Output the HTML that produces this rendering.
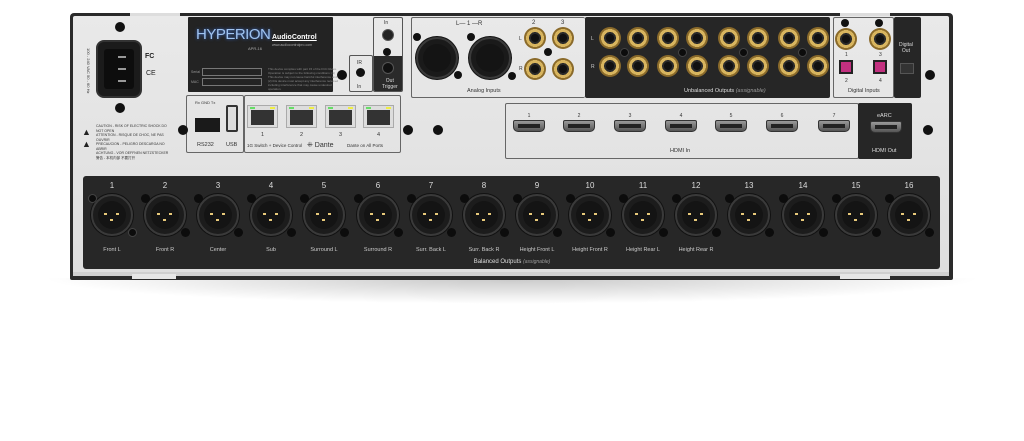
<!DOCTYPE html>
<html><head><meta charset="utf-8"><style>
*{margin:0;padding:0;box-sizing:border-box}
body{width:1024px;height:441px;background:#fff;position:relative;overflow:hidden;font-family:"Liberation Sans",sans-serif}
.a{position:absolute}
.sc{position:absolute;width:10px;height:10px;border-radius:50%;background:#111;margin:-5px 0 0 -5px}
.xlr{position:absolute;width:42px;height:42px;margin:-21px 0 0 -21px;border-radius:50%;background:#1c1c1c;border:2px solid #3a3a3a;box-shadow:0 0 0 1px #111}
.xlr i{position:absolute;width:3px;height:2px;background:#e8c97a}
.xlr::after{content:"";position:absolute;left:5px;top:5px;width:28px;height:28px;border-radius:50%;background:#141414}
.xs{position:absolute;width:9px;height:9px;border-radius:50%;background:#0c0c0c;border:1px solid #444;margin:-4px 0 0 -4px}
.n{position:absolute;color:#ddd;font-size:8px;transform:translateX(-50%)}
.lb{position:absolute;color:#ccc;font-size:5.5px;transform:translateX(-50%);white-space:nowrap}
.rca{position:absolute;width:22px;height:22px;margin:-11px 0 0 -11px;border-radius:50%;background:radial-gradient(circle,#111 0 4px,#2a2a2a 4px 6px,#d8b55f 6px 9px,#8a6a2a 9px 11px)}
.hd{position:absolute;width:32px;height:12px;margin:-6px 0 0 -16px;background:linear-gradient(#999,#555);border-radius:2px 2px 5px 5px;border:1px solid #333}
.hd::after{content:"";position:absolute;left:4px;top:3px;width:22px;height:4px;background:#222}
.eth{position:absolute;width:31px;height:23px;background:#ddd;border:1px solid #aaa}
.eth::after{content:"";position:absolute;left:3px;top:4px;width:23px;height:15px;background:#333}
.eth b{position:absolute;top:1px;width:5px;height:2px}
.t{position:absolute;font-size:5px;color:#333;white-space:nowrap}
</style></head><body>
<!-- shadow -->
<div class="a" style="left:40px;top:278px;width:944px;height:26px;background:radial-gradient(ellipse at 50% 0,rgba(0,0,0,.22),rgba(0,0,0,0) 70%)"></div>
<!-- chassis -->
<div class="a" style="left:70px;top:13px;width:883px;height:267px;background:#2a2a2a;border-radius:4px 4px 2px 2px"></div>
<div class="a" style="left:73px;top:16px;width:876px;height:260px;background:linear-gradient(#e9e9e9,#dedede);border-radius:2px"></div>
<div class="a" style="left:130px;top:13px;width:50px;height:3px;background:#ddd"></div>
<div class="a" style="left:840px;top:13px;width:50px;height:3px;background:#ddd"></div>

<!-- power -->
<div class="a" style="left:96px;top:40px;width:46px;height:58px;background:#1b1b1b;border-radius:8px;border:2px solid #333"></div>
<div class="a" style="left:104px;top:49px;width:30px;height:40px;background:#0d0d0d;border-radius:3px"></div>
<div class="a" style="left:118px;top:56px;width:8px;height:2px;background:#999"></div>
<div class="a" style="left:118px;top:68px;width:8px;height:2px;background:#999"></div>
<div class="a" style="left:118px;top:80px;width:8px;height:2px;background:#999"></div>
<div class="sc" style="left:120px;top:27px"></div><div class="sc" style="left:120px;top:108px"></div>
<div class="t" style="left:145px;top:53px;font-size:7px;font-weight:bold;color:#222">FC</div>
<div class="t" style="left:146px;top:70px;font-size:7px;color:#222">CE</div>
<div class="t" style="left:86px;top:48px;font-size:4px;writing-mode:vertical-rl">100 - 240 VAC 50 - 60 Hz</div>
<div class="a" style="left:82px;top:127px;font-size:9px;color:#222">▲</div>
<div class="a" style="left:82px;top:139px;font-size:9px;color:#222">▲</div>
<div class="t" style="left:96px;top:124px;font-size:3.5px;line-height:4.5px">CAUTION - RISK OF ELECTRIC SHOCK DO<br>NOT OPEN<br>ATTENTION - RISQUE DE CHOC, NE PAS<br>OUVRIR<br>PRECAUCION - PELIGRO DESCARGA NO<br>ABRIR<br>ACHTUNG - VOR OEFFNEN NETZSTECKER<br>警告 - 本机内部 不要打开</div>

<!-- logo label -->
<div class="a" style="left:188px;top:17px;width:145px;height:75px;background:#232323;border-radius:1px"></div>
<div class="a" style="left:196px;top:26px;font-size:15px;color:#9fc3f0;letter-spacing:-.5px;text-shadow:0 0 3px #3a6fd8">HYPERION</div>
<div class="t" style="left:248px;top:46px;color:#aaa;font-size:4px">APR-16</div>
<div class="t" style="left:272px;top:34px;color:#fff;font-size:7px;font-weight:bold;text-decoration:underline">AudioControl</div>
<div class="t" style="left:272px;top:43px;color:#aaa;font-size:3.5px">www.audiocontrolpro.com</div>
<div class="a" style="left:202px;top:68px;width:60px;height:8px;border:1px solid #777"></div>
<div class="a" style="left:202px;top:78px;width:60px;height:8px;border:1px solid #777"></div>
<div class="t" style="left:191px;top:70px;color:#999;font-size:3.5px">Serial</div>
<div class="t" style="left:191px;top:80px;color:#999;font-size:3.5px">MAC</div>
<div class="t" style="left:268px;top:67px;color:#888;font-size:3px;line-height:4px">This device complies with part 15 of the FCC Rules.<br>Operation is subject to the following conditions: (1)<br>This device may not cause harmful interference and<br>(2) this device must accept any interference received<br>including interference that may cause undesired<br>operation.</div>
<div class="sc" style="left:342px;top:75px"></div>

<!-- IR / trigger -->
<div class="a" style="left:349px;top:55px;width:24px;height:37px;border:1px solid #555;border-radius:2px"></div>
<div class="t" style="left:357px;top:60px">IR</div><div class="t" style="left:357px;top:84px">In</div>
<div class="sc" style="left:361px;top:73px;width:9px;height:9px"></div>
<div class="a" style="left:373px;top:17px;width:30px;height:75px;border:1px solid #555;border-radius:2px;overflow:hidden"><div class="a" style="left:0;top:38px;width:30px;height:37px;background:#2a2a2a"></div></div>
<div class="t" style="left:384px;top:20px">In</div>
<div class="sc" style="left:388px;top:35px;width:12px;height:12px;margin:-6px;background:#222;border:1px solid #555"></div>
<div class="sc" style="left:388px;top:53px;width:8px;height:8px"></div>
<div class="sc" style="left:388px;top:68px;width:12px;height:12px;margin:-6px;background:#111;border:1px solid #555"></div>
<div class="t" style="left:382px;top:78px;color:#ddd;line-height:6px;text-align:center">Out<br>Trigger</div>

<!-- analog inputs -->
<div class="a" style="left:411px;top:17px;width:174px;height:81px;border:1px solid #666;border-radius:2px;border-right:none"></div>
<div class="t" style="left:456px;top:21px;font-size:6px">L— 1 —R</div>
<div class="xlr" style="left:437px;top:58px;background:#1a1a1a"></div>
<div class="xlr" style="left:490px;top:58px;background:#1a1a1a"></div>
<div class="sc" style="left:418px;top:38px;width:8px;height:8px"></div><div class="sc" style="left:459px;top:76px;width:8px;height:8px"></div>
<div class="sc" style="left:472px;top:38px;width:8px;height:8px"></div><div class="sc" style="left:513px;top:77px;width:8px;height:8px"></div>
<div class="t" style="left:467px;top:88px;font-size:5.5px">Analog Inputs</div>
<div class="t" style="left:532px;top:20px;font-size:6px">2</div><div class="t" style="left:561px;top:20px;font-size:6px">3</div>
<div class="t" style="left:519px;top:36px">L</div><div class="t" style="left:519px;top:66px">R</div>
<div class="rca" style="left:535px;top:38px"></div><div class="rca" style="left:563px;top:38px"></div>
<div class="rca" style="left:535px;top:69px"></div><div class="rca" style="left:563px;top:69px"></div>
<div class="sc" style="left:549px;top:53px;width:8px;height:8px"></div>

<!-- unbalanced -->
<div class="a" style="left:585px;top:17px;width:245px;height:81px;background:#262626;border-radius:2px"></div>
<div class="t" style="left:591px;top:36px;color:#ccc">L</div><div class="t" style="left:591px;top:64px;color:#ccc">R</div>
<div class="rca" style="left:610px;top:38px"></div><div class="rca" style="left:638px;top:38px"></div><div class="rca" style="left:668px;top:38px"></div><div class="rca" style="left:697px;top:38px"></div><div class="rca" style="left:729px;top:38px"></div><div class="rca" style="left:758px;top:38px"></div><div class="rca" style="left:789px;top:38px"></div><div class="rca" style="left:818px;top:38px"></div>
<div class="rca" style="left:610px;top:66px"></div><div class="rca" style="left:638px;top:66px"></div><div class="rca" style="left:668px;top:66px"></div><div class="rca" style="left:697px;top:66px"></div><div class="rca" style="left:729px;top:66px"></div><div class="rca" style="left:758px;top:66px"></div><div class="rca" style="left:789px;top:66px"></div><div class="rca" style="left:818px;top:66px"></div>
<div class="xs" style="left:624px;top:52px"></div><div class="xs" style="left:682px;top:52px"></div><div class="xs" style="left:743px;top:52px"></div><div class="xs" style="left:802px;top:52px"></div>
<div class="t" style="left:684px;top:88px;color:#ddd;font-size:5.5px">Unbalanced Outputs <i style="color:#999">(assignable)</i></div>

<!-- digital inputs -->
<div class="a" style="left:833px;top:17px;width:61px;height:81px;border:1px solid #666;border-radius:2px"></div>
<div class="sc" style="left:846px;top:24px;width:8px;height:8px"></div><div class="sc" style="left:880px;top:24px;width:8px;height:8px"></div>
<div class="rca" style="left:846px;top:39px"></div><div class="rca" style="left:880px;top:39px"></div>
<div class="t" style="left:845px;top:52px">1</div><div class="t" style="left:879px;top:52px">3</div>
<div class="a" style="left:839px;top:60px;width:14px;height:14px;background:#222;padding:2px"><div style="width:10px;height:10px;background:#c2307f"></div></div>
<div class="a" style="left:873px;top:60px;width:14px;height:14px;background:#222;padding:2px"><div style="width:10px;height:10px;background:#c2307f"></div></div>
<div class="t" style="left:845px;top:78px">2</div><div class="t" style="left:879px;top:78px">4</div>
<div class="t" style="left:848px;top:88px;font-size:5.5px">Digital Inputs</div>
<div class="a" style="left:894px;top:17px;width:27px;height:81px;background:#262626;border-radius:2px"></div>
<div class="t" style="left:899px;top:42px;color:#ddd;line-height:6px;text-align:center">Digital<br>Out</div>
<div class="a" style="left:900px;top:63px;width:14px;height:11px;background:#333;border:1px solid #555"></div>
<div class="sc" style="left:930px;top:75px"></div>

<!-- RS232/USB -->
<div class="a" style="left:186px;top:95px;width:58px;height:58px;border:1px solid #666;border-radius:2px"></div>
<div class="t" style="left:195px;top:100px;font-size:4px">Rx GND Tx</div>
<div class="a" style="left:195px;top:118px;width:25px;height:14px;background:#1a1a1a"></div>
<div class="t" style="left:197px;top:142px;font-size:5.5px">RS232</div>
<div class="a" style="left:226px;top:105px;width:12px;height:27px;background:#ddd;border:2px solid #333;border-radius:2px"></div>
<div class="t" style="left:226px;top:142px;font-size:5.5px">USB</div>
<!-- ethernet -->
<div class="a" style="left:244px;top:95px;width:157px;height:58px;border:1px solid #666;border-radius:2px"></div>
<div class="eth" style="left:247px;top:105px"><b style="left:2px;background:#6d6"></b><b style="right:2px;background:#ee4"></b></div>
<div class="eth" style="left:286px;top:105px"><b style="left:2px;background:#6d6"></b><b style="right:2px;background:#ee4"></b></div>
<div class="eth" style="left:325px;top:105px"><b style="left:2px;background:#6d6"></b><b style="right:2px;background:#ee4"></b></div>
<div class="eth" style="left:363px;top:105px"><b style="left:2px;background:#6d6"></b><b style="right:2px;background:#ee4"></b></div>
<div class="t" style="left:261px;top:132px;font-size:5.5px">1</div><div class="t" style="left:300px;top:132px;font-size:5.5px">2</div><div class="t" style="left:339px;top:132px;font-size:5.5px">3</div><div class="t" style="left:377px;top:132px;font-size:5.5px">4</div>
<div class="t" style="left:247px;top:143px;font-size:4.5px">1G Switch + Device Control</div>
<div class="t" style="left:307px;top:141px;font-size:7px">⁜ Dante</div>
<div class="t" style="left:347px;top:143px;font-size:4.5px">Dante on All Ports</div>
<div class="sc" style="left:183px;top:130px"></div><div class="sc" style="left:408px;top:130px"></div><div class="sc" style="left:438px;top:130px"></div>

<!-- HDMI -->
<div class="a" style="left:505px;top:103px;width:354px;height:56px;border:1px solid #666;border-radius:2px"></div>
<div class="n" style="left:529px;top:113px;color:#333;font-size:5px">1</div><div class="n" style="left:579px;top:113px;color:#333;font-size:5px">2</div><div class="n" style="left:630px;top:113px;color:#333;font-size:5px">3</div><div class="n" style="left:681px;top:113px;color:#333;font-size:5px">4</div><div class="n" style="left:731px;top:113px;color:#333;font-size:5px">5</div><div class="n" style="left:782px;top:113px;color:#333;font-size:5px">6</div><div class="n" style="left:834px;top:113px;color:#333;font-size:5px">7</div>
<div class="hd" style="left:529px;top:126px"></div><div class="hd" style="left:579px;top:126px"></div><div class="hd" style="left:630px;top:126px"></div><div class="hd" style="left:681px;top:126px"></div><div class="hd" style="left:731px;top:126px"></div><div class="hd" style="left:782px;top:126px"></div><div class="hd" style="left:834px;top:126px"></div>
<div class="t" style="left:670px;top:148px;font-size:5.5px">HDMI In</div>
<div class="a" style="left:858px;top:103px;width:54px;height:56px;background:#262626;border-radius:2px"></div>
<div class="t" style="left:877px;top:113px;color:#ddd;font-size:5.5px">eARC</div>
<div class="hd" style="left:886px;top:127px"></div>
<div class="t" style="left:872px;top:148px;color:#ddd;font-size:5.5px">HDMI Out</div>
<div class="sc" style="left:928px;top:130px"></div>

<!-- balanced strip -->
<div class="a" style="left:83px;top:176px;width:857px;height:93px;background:#272727;border-radius:3px"></div>
<div class="n" style="left:112px;top:181px">1</div><div class="n" style="left:165px;top:181px">2</div><div class="n" style="left:218px;top:181px">3</div><div class="n" style="left:271px;top:181px">4</div><div class="n" style="left:324px;top:181px">5</div><div class="n" style="left:378px;top:181px">6</div><div class="n" style="left:431px;top:181px">7</div><div class="n" style="left:484px;top:181px">8</div><div class="n" style="left:537px;top:181px">9</div><div class="n" style="left:590px;top:181px">10</div><div class="n" style="left:643px;top:181px">11</div><div class="n" style="left:696px;top:181px">12</div><div class="n" style="left:749px;top:181px">13</div><div class="n" style="left:803px;top:181px">14</div><div class="n" style="left:856px;top:181px">15</div><div class="n" style="left:909px;top:181px">16</div>
<!-- xlr outs -->
<div class="xlr" style="left:112px;top:215px"></div><div class="xlr" style="left:165px;top:215px"></div><div class="xlr" style="left:218px;top:215px"></div><div class="xlr" style="left:271px;top:215px"></div><div class="xlr" style="left:324px;top:215px"></div><div class="xlr" style="left:378px;top:215px"></div><div class="xlr" style="left:431px;top:215px"></div><div class="xlr" style="left:484px;top:215px"></div><div class="xlr" style="left:537px;top:215px"></div><div class="xlr" style="left:590px;top:215px"></div><div class="xlr" style="left:643px;top:215px"></div><div class="xlr" style="left:696px;top:215px"></div><div class="xlr" style="left:749px;top:215px"></div><div class="xlr" style="left:803px;top:215px"></div><div class="xlr" style="left:856px;top:215px"></div><div class="xlr" style="left:909px;top:215px"></div>
<!-- pins -->
<div class="a" style="left:0;top:0">
<i class="a" style="left:104px;top:213px;width:3px;height:2px;background:#e8c97a;box-shadow:12px 0 #e8c97a,6px 6px #e8c97a,53px 0 #e8c97a,65px 0 #e8c97a,59px 6px #e8c97a,106px 0 #e8c97a,118px 0 #e8c97a,112px 6px #e8c97a,159px 0 #e8c97a,171px 0 #e8c97a,165px 6px #e8c97a,212px 0 #e8c97a,224px 0 #e8c97a,218px 6px #e8c97a,266px 0 #e8c97a,278px 0 #e8c97a,272px 6px #e8c97a,319px 0 #e8c97a,331px 0 #e8c97a,325px 6px #e8c97a,372px 0 #e8c97a,384px 0 #e8c97a,378px 6px #e8c97a,425px 0 #e8c97a,437px 0 #e8c97a,431px 6px #e8c97a,478px 0 #e8c97a,490px 0 #e8c97a,484px 6px #e8c97a,531px 0 #e8c97a,543px 0 #e8c97a,537px 6px #e8c97a,584px 0 #e8c97a,596px 0 #e8c97a,590px 6px #e8c97a,637px 0 #e8c97a,649px 0 #e8c97a,643px 6px #e8c97a,691px 0 #e8c97a,703px 0 #e8c97a,697px 6px #e8c97a,744px 0 #e8c97a,756px 0 #e8c97a,750px 6px #e8c97a,797px 0 #e8c97a,809px 0 #e8c97a,803px 6px #e8c97a"></i>
</div>
<!-- xlr screws -->
<div class="a" style="left:0;top:0">
<div class="xs" style="left:92px;top:198px;box-shadow:53px 0 #0c0c0c,106px 0 #0c0c0c,159px 0 #0c0c0c,212px 0 #0c0c0c,266px 0 #0c0c0c,319px 0 #0c0c0c,372px 0 #0c0c0c,425px 0 #0c0c0c,478px 0 #0c0c0c,531px 0 #0c0c0c,584px 0 #0c0c0c,637px 0 #0c0c0c,691px 0 #0c0c0c,744px 0 #0c0c0c,797px 0 #0c0c0c"></div>
<div class="xs" style="left:132px;top:232px;box-shadow:53px 0 #0c0c0c,106px 0 #0c0c0c,159px 0 #0c0c0c,212px 0 #0c0c0c,266px 0 #0c0c0c,319px 0 #0c0c0c,372px 0 #0c0c0c,425px 0 #0c0c0c,478px 0 #0c0c0c,531px 0 #0c0c0c,584px 0 #0c0c0c,637px 0 #0c0c0c,691px 0 #0c0c0c,744px 0 #0c0c0c,797px 0 #0c0c0c"></div>
</div>
<div class="lb" style="left:112px;top:247px">Front L</div><div class="lb" style="left:165px;top:247px">Front R</div><div class="lb" style="left:218px;top:247px">Center</div><div class="lb" style="left:271px;top:247px">Sub</div><div class="lb" style="left:324px;top:247px">Surround L</div><div class="lb" style="left:378px;top:247px">Surround R</div><div class="lb" style="left:431px;top:247px">Surr. Back L</div><div class="lb" style="left:484px;top:247px">Surr. Back R</div><div class="lb" style="left:537px;top:247px">Height Front L</div><div class="lb" style="left:590px;top:247px">Height Front R</div><div class="lb" style="left:643px;top:247px">Height Rear L</div><div class="lb" style="left:696px;top:247px">Height Rear R</div>
<div class="lb" style="left:512px;top:259px;font-size:6px;color:#ddd">Balanced Outputs <i style="color:#999;font-size:5px">(assignable)</i></div>
<!-- bottom lip -->
<div class="a" style="left:73px;top:272px;width:876px;height:4px;background:#cfcfcf"></div>
<div class="a" style="left:132px;top:274px;width:44px;height:5px;background:#e6e6e6"></div>
<div class="a" style="left:840px;top:274px;width:50px;height:5px;background:#e6e6e6"></div>
</body></html>
